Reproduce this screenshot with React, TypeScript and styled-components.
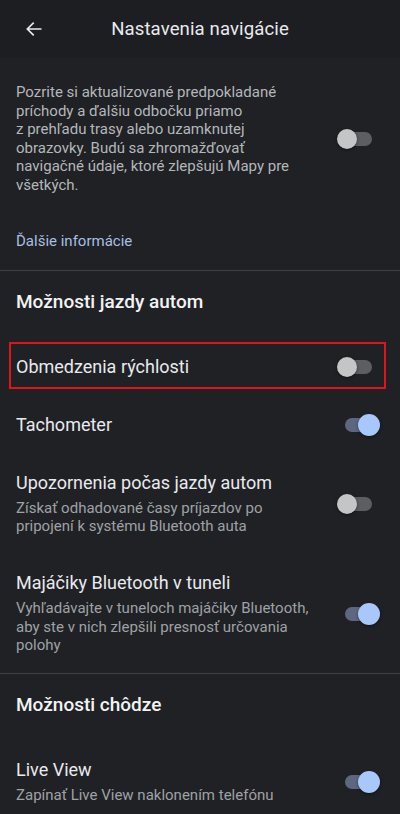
import React from "react";
import styled, { createGlobalStyle } from "styled-components";

const Global = createGlobalStyle`
  html, body { margin: 0; padding: 0; background: #202124; }
  body { font-family: Roboto, "Noto Sans", "Liberation Sans", sans-serif; -webkit-font-smoothing: antialiased; }
  * { box-sizing: border-box; }
`;

const Page = styled.div`
  width: 400px;
  min-height: 814px;
  background: #202124;
  color: #e8eaed;
  overflow: hidden;
`;

const Header = styled.header`
  height: 58px;
  background: #1d1e21;
  display: grid;
  grid-template-columns: 68px 1fr 68px;
  align-items: center;
`;

const BackButton = styled.button`
  background: none;
  border: 0;
  padding: 0;
  width: 68px;
  height: 58px;
  display: flex;
  align-items: center;
  justify-content: center;
  color: #e8eaed;
`;

const Title = styled.h1`
  margin: 0;
  text-align: center;
  font-size: 18.6px;
  font-weight: 400;
  color: #e8eaed;
  letter-spacing: 0.1px;
`;

const Intro = styled.section`
  padding: 25px 0 19px 16px;
  border-bottom: 1px solid #3c4043;
`;

const IntroRow = styled.div`
  display: flex;
  align-items: center;
`;

const Description = styled.p`
  margin: 0;
  width: 290px;
  font-size: 15px;
  line-height: 18.6px;
  color: #b3b7bb;
`;

const Spacer = styled.div`
  flex: 1;
`;

const IntroSwitch = styled.div`
  padding-right: 18px;
`;

const LinkText = styled.a`
  display: block;
  margin-top: 36px;
  font-size: 15px;
  line-height: 20px;
  color: #a6bfe3;
  text-decoration: none;
`;

const Section = styled.section<{ $divider?: boolean }>`
  border-bottom: ${(p) => (p.$divider ? "1px solid #3c4043" : "none")};
`;

const SectionTitle = styled.h2`
  margin: 0;
  padding: 19px 16px 24px;
  font-size: 19px;
  line-height: 24px;
  font-weight: 500;
  color: #f1f3f4;
`;

const Row = styled.div<{ $highlight?: boolean }>`
  position: relative;
  display: flex;
  align-items: center;
  padding: 18px 18px 18px 16px;
  &::after {
    content: "";
    display: ${(p) => (p.$highlight ? "block" : "none")};
    position: absolute;
    top: 4px;
    bottom: 7px;
    left: 9px;
    right: 14px;
    border: 2px solid #e3121b;
    pointer-events: none;
  }
`;

const RowText = styled.div`
  flex: 1;
  min-width: 0;
  padding-right: 20px;
`;

const RowTitle = styled.div`
  font-size: 18px;
  line-height: 22px;
  color: #e8eaed;
`;

const RowSub = styled.div`
  margin-top: 5px;
  font-size: 15px;
  line-height: 18.7px;
  color: #9ea2a6;
`;

const SwitchBox = styled.div`
  position: relative;
  flex: none;
  width: 46px;
  height: 22px;
`;

const Track = styled.span<{ $on: boolean }>`
  position: absolute;
  top: 4px;
  left: ${(p) => (p.$on ? "9px" : "2px")};
  width: 34px;
  height: 14px;
  border-radius: 7px;
  background: ${(p) => (p.$on ? "#5d6880" : "#5c5e62")};
`;

const Thumb = styled.span<{ $on: boolean }>`
  position: absolute;
  top: ${(p) => (p.$on ? "0px" : "1px")};
  left: ${(p) => (p.$on ? "22px" : "1px")};
  width: ${(p) => (p.$on ? "22px" : "20px")};
  height: ${(p) => (p.$on ? "22px" : "20px")};
  border-radius: 50%;
  background: ${(p) => (p.$on ? "#a8c7fa" : "#c4c5c7")};
  box-shadow: 0 1px 3px rgba(0, 0, 0, 0.5);
`;

const Switch = ({ on }: { on: boolean }) => (
  <SwitchBox>
    <Track $on={on} />
    <Thumb $on={on} />
  </SwitchBox>
);

type Item = { title: string; sub?: string; on: boolean; highlight?: boolean };

const driving: Item[] = [
  { title: "Obmedzenia rýchlosti", on: false, highlight: true },
  { title: "Tachometer", on: true },
  {
    title: "Upozornenia počas jazdy autom",
    sub: "Získať odhadované časy príjazdov po pripojení k\u00a0systému Bluetooth auta",
    on: false,
  },
  {
    title: "Majáčiky Bluetooth v tuneli",
    sub: "Vyhľadávajte v\u00a0tuneloch majáčiky Bluetooth, aby ste v\u00a0nich zlepšili presnosť určovania polohy",
    on: true,
  },
];

const walking: Item[] = [
  { title: "Live View", sub: "Zapínať Live View naklonením telefónu", on: true },
];

const SettingRow = ({ item }: { item: Item }) => (
  <Row $highlight={item.highlight}>
    <RowText>
      <RowTitle>{item.title}</RowTitle>
      {item.sub && <RowSub>{item.sub}</RowSub>}
    </RowText>
    <Switch on={item.on} />
  </Row>
);

export default function App() {
  return (
    <Page>
      <Global />
      <Header>
        <BackButton aria-label="Späť">
          <svg width="20" height="20" viewBox="0 0 24 24" fill="none">
            <path d="M20 12H5M11 5l-7 7 7 7" stroke="#e8eaed" strokeWidth="2" strokeLinecap="square" />
          </svg>
        </BackButton>
        <Title>Nastavenia navigácie</Title>
        <span />
      </Header>
      <Intro>
        <IntroRow>
          <Description>
            Pozrite si aktualizované predpokladané príchody a ďalšiu odbočku priamo z{"\u00a0"}prehľadu trasy
            alebo uzamknutej obrazovky. Budú sa zhromažďovať navigačné údaje, ktoré zlepšujú Mapy pre všetkých.
          </Description>
          <Spacer />
          <IntroSwitch>
            <Switch on={false} />
          </IntroSwitch>
        </IntroRow>
        <LinkText href="#">Ďalšie informácie</LinkText>
      </Intro>
      <Section $divider>
        <SectionTitle>Možnosti jazdy autom</SectionTitle>
        {driving.map((it) => (
          <SettingRow key={it.title} item={it} />
        ))}
      </Section>
      <Section>
        <SectionTitle>Možnosti chôdze</SectionTitle>
        {walking.map((it) => (
          <SettingRow key={it.title} item={it} />
        ))}
      </Section>
    </Page>
  );
}
